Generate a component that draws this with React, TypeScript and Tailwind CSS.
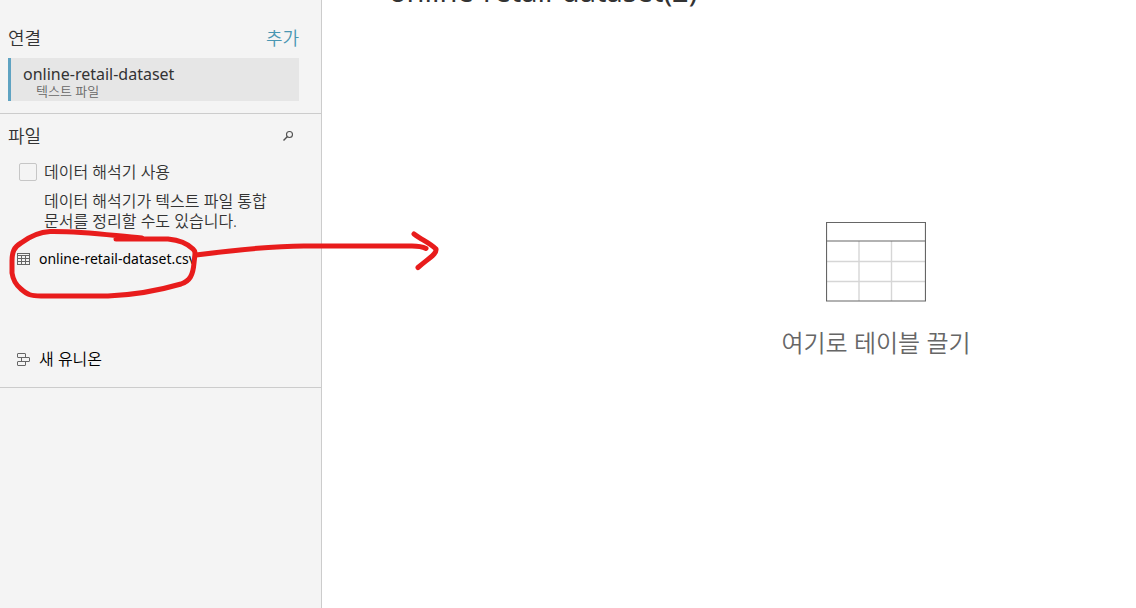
function SearchIcon() {
  return (
    <svg width="12" height="12" viewBox="0 0 12 12" fill="none" stroke="#505050">
      <circle cx="7.5" cy="4.5" r="3" strokeWidth="1.1" />
      <path d="M5.2 6.8 1.5 10.5" strokeWidth="1.4" />
    </svg>
  );
}

function SheetIcon() {
  return (
    <svg width="13" height="12" viewBox="0 0 13 12" fill="none" stroke="#666666" shapeRendering="crispEdges">
      <path d="M.5 .5h12v11h-12zM.5 2.5h12M.5 5.5h12M.5 8.5h12M4.5 2.5v9M8.5 2.5v9" />
    </svg>
  );
}

function UnionIcon() {
  return (
    <svg width="13" height="13" viewBox="0 0 13 13" fill="none" stroke="#666666">
      <rect x=".5" y=".5" width="8" height="4" rx=".5" />
      <rect x="4.5" y="4.5" width="8" height="4" rx=".5" />
      <rect x=".5" y="8.5" width="8" height="4" rx=".5" />
    </svg>
  );
}

function TableDrawing() {
  return (
    <svg width="100" height="80" viewBox="0 0 100 80" fill="none">
      <path d="M1 39.5h98M1 59.5h98M33 19v60M65.5 19v60" stroke="#d6d6d6" strokeWidth="1.4" />
      <path d="M.5 .5h99v78.5h-99zM.5 19h99" stroke="#666666" strokeWidth="1.2" />
    </svg>
  );
}

function DragArrow() {
  return (
    <svg
      className="pointer-events-none absolute top-[220px] left-0"
      width="450"
      height="90"
      viewBox="0 220 450 90"
      fill="none"
      stroke="#e81c1c"
      strokeWidth="5"
      strokeLinecap="round"
      strokeLinejoin="round"
    >
      <path d="M142 238C115 236 85 231 50 231.500C39 232 29 237 21 243C14 247 12 252 12 261V273C13 280 16 285 21 289C28 295 31 296 41 296H108C132 295 157 291 181 284C190 281 193 275 194 263C195 253 196 252 193 249C188 244 178 240 168 239H116" />
      <path d="M196 255C235 250 270 246 304 246H412C418 246 423 247 426 248.500" />
      <path d="M414 234C422 240 430 243 436 249C437 254 429 258 418 267.500" />
    </svg>
  );
}

export default function App() {
  return (
    <div className="relative flex h-screen overflow-hidden bg-white font-['Noto_Sans','Noto_Sans_CJK_KR',sans-serif] text-[#333333]">
      <aside className="w-[322px] shrink-0 border-r border-[#cccccc] bg-[#f4f4f4]">
        <section className="border-b border-[#cccccc] pt-[25px] pr-[22px] pb-3 pl-2">
          <div className="mb-[7px] flex items-center justify-between text-lg leading-[26px] font-[350]">
            <h2>연결</h2>
            <button type="button" className="text-[#4996b2]">추가</button>
          </div>
          <button type="button" className="block w-full border-l-3 border-[#5fa3c2] bg-[#e6e6e6] px-3 pt-1.5 pb-0.5 text-left">
            <span className="block text-base leading-5">online-retail-dataset</span>
            <span className="block pl-[13px] text-[13px] leading-[15px] font-[350] text-[#666666]">텍스트 파일</span>
          </button>
        </section>

        <section className="border-b border-[#cccccc] pt-[9px] pb-[18px]">
          <div className="flex items-center justify-between pr-[27px] pl-2">
            <h2 className="text-lg leading-[26px] font-[350]">파일</h2>
            <button type="button" aria-label="검색">
              <SearchIcon />
            </button>
          </div>
          <div className="mt-[13px] flex items-center gap-[7px] pl-[19px]">
            <input
              id="interpreter"
              type="checkbox"
              className="size-[18px] appearance-none rounded-xs border border-[#c6c6c6] bg-[#f4f4f4] checked:bg-[#5fa3c2]"
            />
            <label htmlFor="interpreter" className="text-base leading-5 font-[350]">
              데이터 해석기 사용
            </label>
          </div>
          <p className="mt-[9px] pr-10 pl-11 text-base leading-5 font-[350]">
            데이터 해석기가 텍스트 파일 통합 문서를 정리할 수도 있습니다.
          </p>
          <button type="button" className="mt-[18px] flex items-center gap-[9px] pl-[17px] text-sm leading-5 text-black">
            <SheetIcon />
            online-retail-dataset.csv
          </button>
          <button type="button" className="mt-20 flex items-center gap-[9px] pl-[17px] text-base leading-5 font-[350] text-black">
            <UnionIcon />
            새 유니온
          </button>
        </section>
      </aside>

      <main className="flex min-w-0 flex-1 flex-col overflow-hidden">
        <h1 className="-mt-[29px] pl-[67px] text-[29px] leading-10">online-retail-dataset(2)</h1>
        <div className="flex flex-col items-center gap-[23px] pt-[211px] pl-[294px] text-[#666666]">
          <TableDrawing />
          <p className="text-2xl leading-9 font-[350]">여기로 테이블 끌기</p>
        </div>
      </main>

      <DragArrow />
    </div>
  );
}
